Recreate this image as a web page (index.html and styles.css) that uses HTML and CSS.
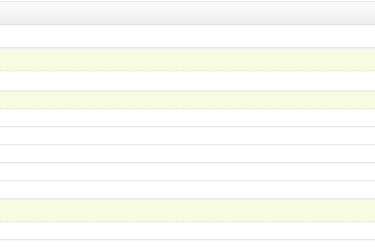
FILE: index.html
```html
<!DOCTYPE html>
<html lang="en">
<head>
    <meta charset="UTF-8">
    <meta name="viewport" content="width=device-width, initial-scale=1.0">
    <title>List</title>
    <link rel="stylesheet" href="styles.css">
</head>
<body>
    <div class="list-header"></div>
    <ul class="list">
        <li class="row tall"></li>
        <li class="row tall marked"></li>
        <li class="row mid"></li>
        <li class="row marked"></li>
        <li class="row"></li>
        <li class="row"></li>
        <li class="row"></li>
        <li class="row"></li>
        <li class="row"></li>
        <li class="row tall marked"></li>
        <li class="row"></li>
        <li class="row"></li>
    </ul>
</body>
</html>
```

FILE: styles.css
```css
body {
    margin: 0;
    font-family: 'Liberation Sans', Arial, sans-serif;
    background-color: #fff;
}

.list-header {
    height: 22px;
    margin-top: 1px;
    border-top: 1px solid #e6e6e6;
    border-bottom: 1px solid #e0e0e0;
    background: linear-gradient(to bottom, #fbfbfb, #eeeeee);
}

.list {
    list-style: none;
    margin: 0;
    padding: 0;
}

.row {
    height: 16px;
    border-top: 1px solid #f7f7f7;
    border-bottom: 1px solid #e8e8e8;
    background-color: #fff;
}

.row.tall {
    height: 21px;
}

.row.mid {
    height: 18px;
}

/* highlighted rows */
.row.marked {
    background-color: #f9fbe1;
    border-top: 1px solid #efefef;
    border-bottom: 1px dashed #eaead0;
}
```
